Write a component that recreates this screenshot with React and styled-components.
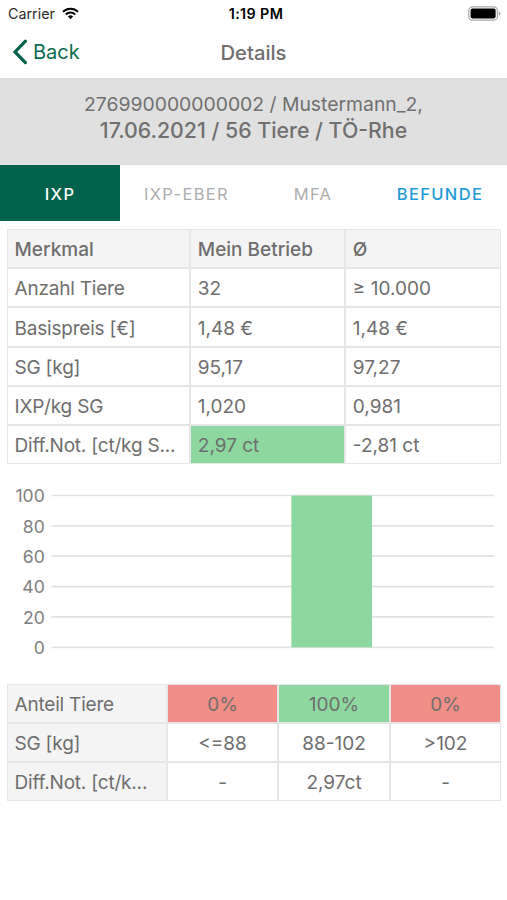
import React, { useState } from 'react';
import styled, { createGlobalStyle } from 'styled-components';

const merkmale = [
  { name: 'Anzahl Tiere', betrieb: '32', schnitt: '≥ 10.000' },
  { name: 'Basispreis [€]', betrieb: '1,48 €', schnitt: '1,48 €' },
  { name: 'SG [kg]', betrieb: '95,17', schnitt: '97,27' },
  { name: 'IXP/kg SG', betrieb: '1,020', schnitt: '0,981' },
  {
    name: 'Diff.Not. [ct/kg S...',
    betrieb: '2,97 ct',
    schnitt: '-2,81 ct',
    color: '#8dd8a0',
  },
];

const klassen = [
  { anteil: 0, sg: '<=88', diff: '-', color: '#f08e87' },
  { anteil: 100, sg: '88-102', diff: '2,97ct', color: '#8dd8a0' },
  { anteil: 0, sg: '>102', diff: '-', color: '#f08e87' },
];

function StatusBar() {
  return (
    <Status>
      <Carrier>
        <span>Carrier</span>
        <WifiIcon />
      </Carrier>
      <Time>1:19 PM</Time>
      <BatteryIcon />
    </Status>
  );
}

function WifiIcon() {
  return (
    <svg width="17" height="13" viewBox="0 0 17 13">
      <path d="M8.5 12.2 L5.9 9.5 A3.7 3.7 0 0 1 11.1 9.5 Z" fill="#000" />
      <path
        d="M3.8 7.5 A6.7 6.7 0 0 1 13.2 7.5"
        fill="none"
        stroke="#000"
        strokeWidth="2"
      />
      <path
        d="M1 4.7 A10.7 10.7 0 0 1 16 4.7"
        fill="none"
        stroke="#000"
        strokeWidth="2"
      />
    </svg>
  );
}

function BatteryIcon() {
  return (
    <svg width="33" height="15" viewBox="0 0 33 15">
      <rect
        x="0.8"
        y="0.8"
        width="28.6"
        height="13.4"
        rx="3.8"
        fill="none"
        stroke="#a8a8a8"
        strokeWidth="1.2"
      />
      <rect x="2.6" y="2.6" width="25" height="9.8" rx="1.8" fill="#000" />
      <path d="M30.8 5.2 Q32.4 6 32.4 7.5 Q32.4 9 30.8 9.8 Z" fill="#a8a8a8" />
    </svg>
  );
}

function Chart() {
  const ticks = [100, 80, 60, 40, 20, 0];
  const yPos = (value) => 167.3 - value * 1.518;
  return (
    <ChartSvg width="507" height="190" viewBox="0 0 507 190">
      {ticks.map((tick) => (
        <g key={tick}>
          <line x1="51.5" x2="494" y1={yPos(tick)} y2={yPos(tick)} />
          <text x="44.8" y={yPos(tick) + 6.8}>
            {tick}
          </text>
        </g>
      ))}
      {klassen.map((klasse, i) => (
        <rect
          key={klasse.sg}
          x={180.8 + i * 110.6}
          y={yPos(klasse.anteil)}
          width="80.6"
          height={klasse.anteil * 1.518}
          fill={klasse.color}
        />
      ))}
    </ChartSvg>
  );
}

function App() {
  const [tab, setTab] = useState('IXP');
  return (
    <Screen>
      <GlobalStyle />
      <StatusBar />
      <NavBar>
        <BackBtn>
          <svg width="16" height="26" viewBox="0 0 16 26">
            <path
              d="M13.4 2.2 L3 12.9 L13.4 23.6"
              fill="none"
              stroke="#00624a"
              strokeWidth="3.2"
              strokeLinecap="round"
            />
          </svg>
          <span>Back</span>
        </BackBtn>
        <Title>Details</Title>
      </NavBar>
      <Info>
        <InfoFirst>276990000000002 / Mustermann_2,</InfoFirst>
        <InfoSecond>17.06.2021 / 56 Tiere / TÖ-Rhe</InfoSecond>
      </Info>
      <Tabs>
        <Tab $active={tab === 'IXP'} onClick={() => setTab('IXP')}>
          IXP
        </Tab>
        <Tab disabled>IXP-EBER</Tab>
        <Tab disabled>MFA</Tab>
        <Tab $active={tab === 'BEFUNDE'} onClick={() => setTab('BEFUNDE')}>
          BEFUNDE
        </Tab>
      </Tabs>
      <MerkmalTable>
        <HeadCell>Merkmal</HeadCell>
        <HeadCell>Mein Betrieb</HeadCell>
        <HeadCell>Ø</HeadCell>
        {merkmale.map((row) => (
          <React.Fragment key={row.name}>
            <LabelCell>{row.name}</LabelCell>
            <Cell $color={row.color}>{row.betrieb}</Cell>
            <Cell>{row.schnitt}</Cell>
          </React.Fragment>
        ))}
      </MerkmalTable>
      <Chart />
      <KlassenTable>
        <LabelCell $color="#f4f4f4">Anteil Tiere</LabelCell>
        {klassen.map((klasse) => (
          <Cell key={klasse.sg} $center $color={klasse.color}>
            {klasse.anteil}%
          </Cell>
        ))}
        <LabelCell $color="#f4f4f4">SG [kg]</LabelCell>
        {klassen.map((klasse) => (
          <Cell key={klasse.sg} $center>
            {klasse.sg}
          </Cell>
        ))}
        <LabelCell $color="#f4f4f4">Diff.Not. [ct/k...</LabelCell>
        {klassen.map((klasse) => (
          <Cell key={klasse.sg} $center>
            {klasse.diff}
          </Cell>
        ))}
      </KlassenTable>
    </Screen>
  );
}

export default App;

const GlobalStyle = createGlobalStyle`
  * {
    box-sizing: border-box;
  }

  body {
    margin: 0;
    background-color: white;
  }

  button {
    padding: 0;
    border: none;
    background: none;
    font-family: inherit;
  }
`;

const Screen = styled.div`
  width: 507px;
  height: 900px;
  overflow: hidden;
  background-color: white;
  color: #6e6e6e;
  font-family: Inter, 'Liberation Sans', sans-serif;
`;

const Status = styled.div`
  display: grid;
  grid-template-columns: 1fr auto 1fr;
  align-items: center;
  height: 27px;
  padding: 0 6px 0 8px;
  color: black;

  & > svg {
    justify-self: end;
  }
`;

const Carrier = styled.div`
  display: flex;
  align-items: center;
  gap: 7px;
  font-size: 14.3px;
  color: #2b2b2b;
`;

const Time = styled.p`
  margin: 0;
  padding-left: 3px;
  font-size: 14.3px;
  font-weight: 600;
  letter-spacing: 0.4px;
`;

const NavBar = styled.div`
  display: grid;
  grid-template-columns: 1fr auto 1fr;
  align-items: center;
  height: 51px;
  padding: 0 12px 1px;
`;

const BackBtn = styled.button`
  display: flex;
  align-items: center;
  gap: 5px;
  font-size: 20px;
  color: #0b6b50;
`;

const Title = styled.h1`
  margin: 0;
  font-size: 20.2px;
  font-weight: 550;
`;

const Info = styled.div`
  height: 87px;
  padding-top: 12px;
  border-top: 1px solid #dadada;
  background-color: #e0e0e0;
  text-align: center;
  color: #707070;
`;

const InfoFirst = styled.p`
  margin: 0;
  font-size: 19.35px;
  line-height: 26px;
`;

const InfoSecond = styled.p`
  margin: 0;
  font-size: 21.3px;
  font-weight: 450;
  line-height: 26px;
`;

const Tabs = styled.div`
  display: grid;
  grid-template-columns: 120px 133px 120px 134px;
  height: 56px;
`;

const Tab = styled.button`
  padding-top: 2px;
  font-size: 16.5px;
  font-weight: 500;
  letter-spacing: 1.35px;
  color: ${({ $active }) => ($active ? 'white' : '#1f9bd7')};
  background-color: ${({ $active }) => ($active ? '#00624a' : 'white')};

  &:disabled {
    font-weight: 400;
    color: #adadad;
  }
`;

const MerkmalTable = styled.div`
  display: grid;
  grid-template-columns: 183.3px 155px 155.7px;
  grid-auto-rows: 39.1px;
  width: 494px;
  margin: 8.3px 6px 0 7px;
`;

const KlassenTable = styled.div`
  display: grid;
  grid-template-columns: 160px 111px 112px 111px;
  grid-auto-rows: 39px;
  width: 494px;
  margin: 14px 6px 0 7px;
`;

const Cell = styled.div`
  display: flex;
  align-items: center;
  justify-content: ${({ $center }) => ($center ? 'center' : 'flex-start')};
  padding: 2px 6.5px 0;
  border: 1px solid #e6e6e6;
  background-color: ${({ $color }) => $color || 'white'};
  font-size: 19px;
  white-space: nowrap;
`;

const LabelCell = styled(Cell)`
  letter-spacing: -0.2px;
`;

const HeadCell = styled(Cell)`
  background-color: #f4f4f4;
  font-weight: 450;
`;

const ChartSvg = styled.svg`
  display: block;
  margin-top: 16px;

  & line {
    stroke: #e2e2e2;
    stroke-width: 1.7;
  }

  & text {
    font-size: 17.6px;
    text-anchor: end;
    fill: #808080;
  }
`;
